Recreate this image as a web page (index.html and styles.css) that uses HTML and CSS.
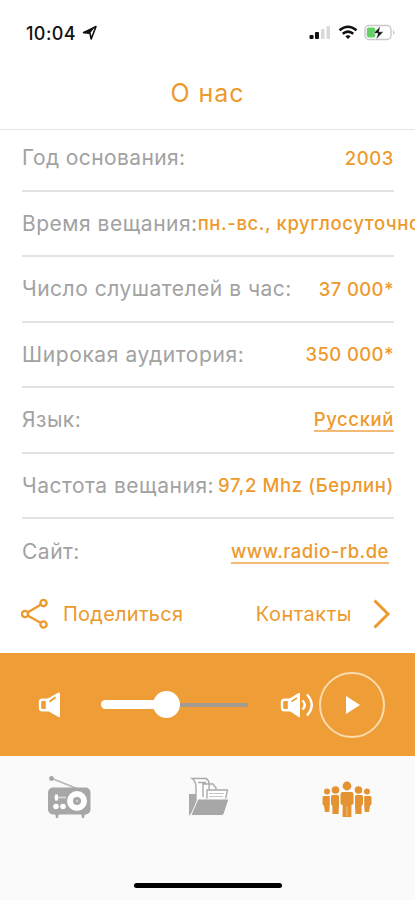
FILE: index.html
```html
<!DOCTYPE html>
<html lang="ru">
<head>
<meta charset="utf-8">
<title>О нас</title>
<link rel="stylesheet" href="styles.css">
</head>
<body>
<div class="status">
  <span class="time">10:04</span>
  <svg class="loc" width="16" height="16" viewBox="0 0 16 16"><path d="M1.5 7.6 14 1.5 9.2 14 8 8.2Z" fill="none" stroke="#111" stroke-width="1.6" stroke-linejoin="round"/><path d="M1.5 7.6 13 2 8 8.2Z" fill="#111"/></svg>
  <svg class="indicators" width="86" height="20" viewBox="0 0 86 20">
    <rect x="0.5" y="12" width="4" height="4" rx="1" fill="#111"/><rect x="6" y="9" width="4" height="7" rx="1" fill="#111"/><rect x="12" y="6" width="3.5" height="10" rx="1" fill="#d9d9d9"/><rect x="17.5" y="3" width="3.5" height="13" rx="1" fill="#d9d9d9"/>
    <g fill="none" stroke="#111" stroke-width="2.5"><path d="M30.5 7.2Q39 0.2 47.5 7.2"/><path d="M33.7 10.8Q39 6.4 44.3 10.8"/></g><path d="M36.3 13.2Q39 11.2 41.7 13.2L39 16Z" fill="#111"/>
    <rect x="56" y="2.5" width="26" height="14" rx="4" fill="#fff" stroke="#c9c9c9" stroke-width="1.4"/><path d="M84 7Q87 9.5 84 12Z" fill="#c9c9c9"/><rect x="57.8" y="4.5" width="8.5" height="10" rx="2" fill="#62d267"/><path d="M71.5 3 64.5 10.3H69L67 16.5 74.5 8.8H70Z" fill="#111" stroke="#fff" stroke-width=".5"/>
  </svg>
</div>
<header class="header"><h1>О нас</h1></header>
<main class="list">
  <div class="row"><span class="label l1">Год основания:</span><span class="value v1">2003</span></div>
  <div class="row"><span class="label l2">Время вещания:</span><span class="value v2">пн.-вс., круглосуточно</span></div>
  <div class="row"><span class="label l3">Число слушателей в час:</span><span class="value v3">37 000*</span></div>
  <div class="row"><span class="label l4">Широкая аудитория:</span><span class="value v4">350 000*</span></div>
  <div class="row"><span class="label l5">Язык:</span><a class="value v5 link">Русский</a></div>
  <div class="row"><span class="label l6">Частота вещания:</span><span class="value v6">97,2 Mhz (Берлин)</span></div>
  <div class="row last"><span class="label l7">Сайт:</span><a class="value v7 link">www.radio-rb.de</a></div>
</main>
<div class="actions">
  <svg width="28" height="32" viewBox="0 0 28 32" fill="none" stroke="#ed9a2d" stroke-width="2.4"><circle cx="4" cy="16" r="3.1"/><circle cx="22.5" cy="5" r="3.1"/><circle cx="22.5" cy="26.5" r="3.1"/><path d="M7 14.3 19.6 6.8M7 17.7 19.6 24.8"/></svg>
  <span class="action share">Поделиться</span>
  <span class="action contacts">Контакты</span>
  <svg width="18" height="32" viewBox="0 0 18 32" fill="none" stroke="#ed9a2d" stroke-width="3"><path d="M1.5 2.5 15 16 1.5 29.5"/></svg>
</div>
<section class="player">
  <svg class="quiet" width="24" height="28" viewBox="0 0 24 28"><path d="M9 8.7H4.5Q2 8.7 2 11v6q0 2.3 2.5 2.3H9Z" fill="none" stroke="#fff" stroke-width="2.4"/><path d="M9 8 20.5 1.5Q22 1 22 3v22q0 2-1.5 1L9 19.5Z" fill="#fff"/><path d="M11.5 10.7 17.5 6.2" stroke="#ed9a2d" stroke-width="1.8"/></svg>
  <div class="slider"><i class="filled"></i><i class="thumb"></i><i class="rest"></i></div>
  <svg class="loud" width="34" height="28" viewBox="0 0 34 28"><path d="M9 8.7H4.5Q2 8.7 2 11v6q0 2.3 2.5 2.3H9Z" fill="none" stroke="#fff" stroke-width="2.4"/><path d="M9 8 18.5 2Q20 1.5 20 3v22q0 2-1.5 1L9 19.5Z" fill="#fff"/><path d="M11.5 10.7 17 6.8" stroke="#ed9a2d" stroke-width="1.6"/><path d="M22.5 9.5Q27 14 22.5 18.5M27 3.5Q36.5 14 27 24.5" fill="none" stroke="#fff" stroke-width="2.4"/></svg>
  <div class="play"><svg width="16" height="20" viewBox="0 0 16 20"><path d="M1 1 15 10 1 19Z" fill="#fff"/></svg></div>
</section>
<nav class="tabs">
  <svg width="46" height="46" viewBox="0 0 46 46"><path d="M5 3.5 31 14" stroke="#b5b5b5" stroke-width="1.5"/><circle cx="4.5" cy="3.5" r="2.4" fill="#a5a5a5"/><rect x="1" y="12.5" width="42.5" height="27" rx="5" fill="#a7a7a7"/><path d="M8 38h4l-1 5H9zM34 38h4l-1 5h-2z" fill="#a7a7a7"/><circle cx="30" cy="26" r="10" fill="#fff"/><circle cx="30" cy="26" r="4" fill="#a7a7a7"/><circle cx="30" cy="26" r="1.3" fill="#ccc"/><path d="M7 22.5H19" stroke="#ddd" stroke-width="1.6"/><rect x="8" y="19.5" width="3" height="6" fill="#fff"/><circle cx="9" cy="31.5" r="2.8" fill="#fff"/><circle cx="16" cy="31.5" r="2.8" fill="#fff"/></svg>
  <svg class="folder" width="44" height="42" viewBox="0 0 44 42"><path d="M1 40V18H7L9 20V30Z" fill="#aaa"/><path d="M8 26V11Q8 5 4 2.5H18Q21 4 21 8V23" fill="#fff" stroke="#aaa" stroke-width="1.4"/><path d="M10 6.5H18M15 21V8H25L28 12V20" fill="none" stroke="#aaa" stroke-width="1.4"/><path d="M19 21V14H39.5L37 25H18Z" fill="#fff" stroke="#aaa" stroke-width="1.4"/><path d="M21 17.5H36M21 20.5H35" stroke="#c5c5c5" stroke-width="1.2"/><path d="M3 39 10 23H41L36 38Q35 39.5 33 39.5H3Z" fill="#a7a7a7" stroke="#fafafa"/></svg>
  <svg class="people" width="50" height="38" viewBox="0 0 50 38" fill="#e39331"><g id="side"><circle cx="5" cy="10.5" r="3"/><path d="M1.5 15H7.8V24L7.3 31H3L2 25 0.5 23V17Q.5 15 1.5 15Z"/><circle cx="13.5" cy="9" r="3.8"/><path d="M10.4 14H15.5Q17 14 17 16V24L16.6 33H10.4V25L9 23V16Q9 14 10.4 14Z"/></g><use href="#side" transform="matrix(-1 0 0 1 50 0)"/><circle cx="25" cy="5" r="4.4"/><path d="M20.5 11H29.5Q31.5 11 31.5 14V23L29.4 24V36H20.6V24L18.5 23V14Q18.5 11 20.5 11Z"/><path d="M25 25V35" stroke="#f5bd7c" stroke-width="1"/></svg>
</nav>
<div class="home"></div>
</body>
</html>
```
FILE: styles.css
```css
* { box-sizing: border-box; }
body { margin: 0; width: 415px; height: 900px; overflow: hidden; background: #fff; font-family: Inter, sans-serif; display: flex; flex-direction: column; }
.status { height: 66px; flex: none; display: flex; align-items: center; padding: 0 20px 0 26px; }
.time { font-size: 18px; font-weight: 500; color: #111; letter-spacing: .4px; width: 52px; }
.loc { margin-left: 4px; }
.indicators { margin-left: auto; }
.header { height: 64px; flex: none; border-bottom: 1px solid #e6e6e6; display: flex; justify-content: center; padding-top: 11px; }
h1 { margin: 0; font-size: 25px; line-height: 32px; font-weight: 400; color: #ed9a2d; letter-spacing: .9px; }
.list { flex: none; margin-top: -4px; padding: 0 21px 0 22px; }
.row { height: 65.5px; display: flex; align-items: center; justify-content: space-between; border-bottom: 2px solid #e3e3e3; white-space: nowrap; }
.row.last { border: 0; }
.label { font-size: 21px; color: #a2a2a2; letter-spacing: .5px; }
.l1 { letter-spacing: .4px; }
.l4 { letter-spacing: .6px; }
.value { font-size: 18.5px; font-weight: 500; color: #ed9a2d; letter-spacing: .6px; }
.v3, .v4 { letter-spacing: .4px; }
.link { border-bottom: 2px solid #f3b975; line-height: 22px; }
.v7 { margin-right: 5px; letter-spacing: .5px; }
.actions { flex: none; height: 68.5px; display: flex; align-items: center; padding: 0 24px 10px 21px; color: #ed9a2d; }
.action { font-size: 20px; letter-spacing: .6px; white-space: nowrap; }
.share { margin-left: 14px; letter-spacing: .25px; }
.contacts { margin: 0 21px 0 auto; letter-spacing: .5px; }
.player { flex: none; height: 103px; background: #ef9d37; display: flex; align-items: center; padding: 0 30px 0 38px; }
.slider { display: flex; align-items: center; width: 147px; margin-left: 39px; }
.filled { width: 56px; height: 9px; border-radius: 5px; background: #fff; }
.thumb { width: 27px; height: 27px; border-radius: 50%; background: #fff; margin-left: -4px; }
.rest { flex: 1; height: 4px; background: #a39b91; }
.loud { margin-left: auto; }
.play { width: 66px; height: 66px; margin-left: 5px; border: 2px solid #fbdcae; border-radius: 50%; display: flex; align-items: center; justify-content: center; padding-left: 2px; }
.tabs { flex: 1; background: #fafafa; display: flex; justify-content: space-between; align-items: flex-start; padding: 19px 43px 0 47px; }
.folder { margin: 1px 0 0 5px; }
.people { margin-top: 6px; }
.home { flex: none; height: 17px; background: #fafafa; display: flex; justify-content: center; }
.home::before { content: ""; width: 148px; height: 5px; border-radius: 3px; background: #000; }
```
